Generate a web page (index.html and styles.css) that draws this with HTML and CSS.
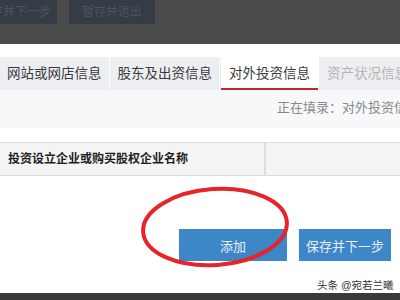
FILE: index.html
```html
<!DOCTYPE html>
<html lang="zh-CN">
<head>
    <meta charset="UTF-8">
    <title>对外投资信息</title>
    <link rel="stylesheet" href="styles.css">
</head>
<body>
    <div class="topbar">
        <div class="top-btn first"><span>保存并下一步</span></div>
        <div class="top-btn second">暂存并退出</div>
    </div>

    <div class="tabs">
        <div class="tab">网站或网店信息</div>
        <div class="tab">股东及出资信息</div>
        <div class="tab active">对外投资信息</div>
        <div class="tab disabled">资产状况信息</div>
    </div>

    <div class="status">正在填录：对外投资信息</div>

    <div class="table-head">
        <div class="cell name">投资设立企业或购买股权企业名称</div>
        <div class="cell"></div>
    </div>

    <div class="actions">
        <button class="btn add">添加</button>
        <button class="btn next">保存并下一步</button>
        <svg class="mark" width="160" height="90" viewBox="0 0 160 90">
            <ellipse cx="76" cy="42" rx="72" ry="38" transform="rotate(-4 76 42)"
                     fill="none" stroke="#e8232a" stroke-width="4"/>
        </svg>
    </div>

    <div class="watermark">头条 @宛若兰曦</div>
    <div class="bottombar"></div>
</body>
</html>
```

FILE: styles.css
```css
body {
    margin: 0;
    width: 400px;
    height: 300px;
    overflow: hidden;
    background: #fff;
    font-family: "Liberation Sans", "Noto Sans CJK SC", sans-serif;
    color: #333;
}

.topbar {
    height: 44px;
    background: #4a4a4a;
    display: flex;
    align-items: flex-start;
}

.top-btn {
    height: 24px;
    background: #353c46;
    color: #4b545f;
    font-size: 12px;
    line-height: 24px;
    overflow: hidden;
    white-space: nowrap;
}

.top-btn.first {
    width: 57px;
    display: flex;
    justify-content: flex-end;
    padding-right: 6px;
    box-sizing: border-box;
}

.top-btn.second {
    width: 86px;
    margin-left: 12px;
    text-align: center;
}

.tabs {
    margin-top: 13px;
    height: 33px;
    background: #eceef1;
    display: flex;
    overflow: hidden;
}

.tab {
    padding: 0 7px;
    font-size: 13.5px;
    line-height: 33px;
    color: #3a3a3a;
    border-right: 1px solid #fff;
    margin-right: 1px;
    white-space: nowrap;
}

.tab.active {
    padding: 0 8px;
    background: #fff;
    box-shadow: inset 0 -2px 0 #c0262d;
}

.tab.disabled {
    color: #b5b5b5;
    border-right: none;
}

.status {
    height: 38px;
    background: #f7f8fa;
    padding-left: 277px;
    font-size: 13px;
    line-height: 36px;
    color: #8a8a8a;
    white-space: nowrap;
    overflow: hidden;
}

.table-head {
    margin-top: 14px;
    height: 32px;
    background: #f4f4f4;
    border-top: 1px solid #dcdcdc;
    border-bottom: 1px solid #dcdcdc;
    display: flex;
}

.cell {
    flex: 1;
}

.cell.name {
    flex: 0 0 266px;
    border-right: 2px solid #dcdcdc;
    padding-left: 8px;
    box-sizing: border-box;
    font-size: 12px;
    font-weight: bold;
    line-height: 32px;
    color: #1e1e1e;
}

.actions {
    position: relative;
    margin-top: 53px;
    display: flex;
    padding-left: 179px;
    gap: 12px;
}

.btn {
    height: 32px;
    border: none;
    background: #3d86c8;
    color: #e8f0f8;
    font-family: inherit;
    font-size: 13px;
    padding: 0;
}

.btn.add {
    width: 108px;
}

.btn.next {
    width: 92px;
}

.mark {
    position: absolute;
    left: 139px;
    top: -44px;
}

.watermark {
    margin-top: 17px;
    padding-left: 317px;
    font-size: 10.5px;
    color: #333;
    white-space: nowrap;
    line-height: 14px;
}

.bottombar {
    margin-top: 1px;
    height: 7px;
    background: #3a3a3a;
}
```
